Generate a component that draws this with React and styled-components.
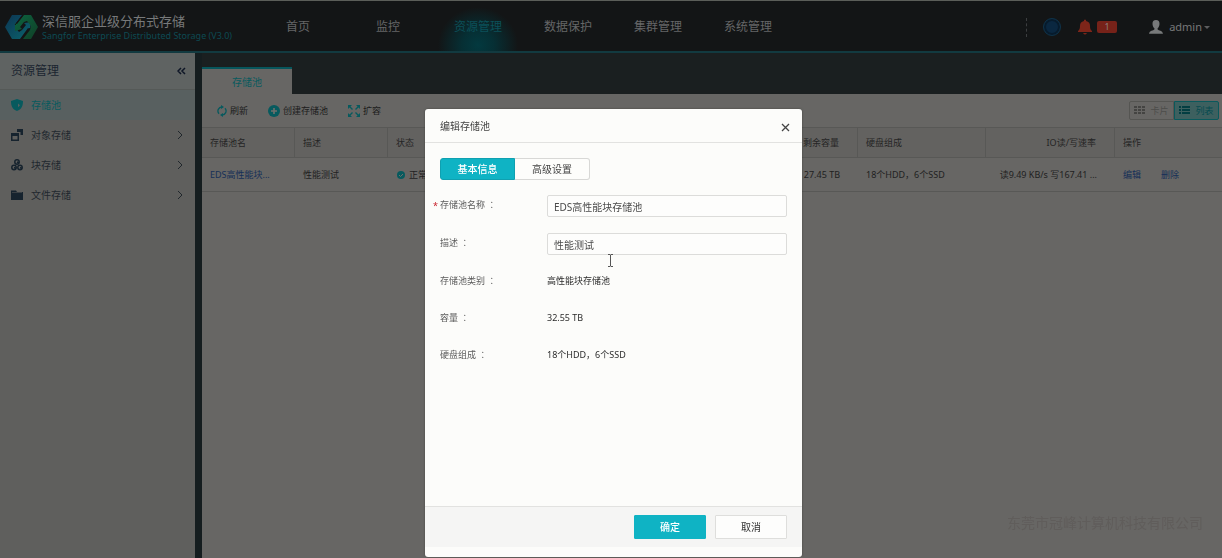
import React from "react";
import styled, { createGlobalStyle, css } from "styled-components";

const teal = "#0fb3c4";
const dimTeal = "#075a5e";
const line = "#585856";

const Global = createGlobalStyle`
  *, *::before, *::after { box-sizing: border-box; }
  body {
    margin: 0;
    font-family: "Noto Sans", "Noto Sans CJK SC", sans-serif;
    font-size: 9px;
    line-height: 14px;
    color: #1f1f1f;
    background: #676664;
  }
  button, input { font-family: inherit; font-size: inherit; line-height: inherit; color: inherit; }
  button { cursor: pointer; background: none; border: 0; padding: 0; }
  a { color: inherit; text-decoration: none; }
  h1, h2, p, ul { margin: 0; padding: 0; font-weight: 400; }
  ul { list-style: none; }
`;

const Page = styled.div`
  min-height: 100vh;
  display: flex;
  flex-direction: column;
`;

const Header = styled.header`
  height: 53px;
  padding-top: 2px;
  display: flex;
  align-items: center;
  background: #131516;
  border-top: 1px solid #5b5e59;
  border-bottom: 2px solid #123a40;
`;

const Brand = styled.div`
  width: 253px;
  flex: none;
  padding-left: 5px;
  display: flex;
  align-items: center;
  gap: 4px;
  white-space: nowrap;
`;

const BrandName = styled.h1`
  font-size: 13px;
  line-height: 16px;
  color: #77797a;
`;

const BrandSub = styled.p`
  font-size: 9px;
  line-height: 13px;
  color: #0d4a53;
`;

const Nav = styled.nav`
  display: flex;
  flex: 1;
  align-self: stretch;
`;

const NavLink = styled.a`
  width: 90px;
  display: flex;
  align-items: center;
  justify-content: center;
  font-size: 12px;
  color: ${(p) => (p.$active ? "#0b5059" : "#656667")};
  ${(p) =>
    p.$active &&
    css`
      background: radial-gradient(ellipse 40px 38px at 50% 88%, #03393f 0%, #062f34 40%, #131516 100%);
    `}
`;

const Tools = styled.div`
  display: flex;
  align-items: center;
  padding-right: 12px;
`;

const Dashes = styled.span`
  height: 19px;
  border-left: 1px dashed #3c3e40;
  margin-right: 16px;
`;

const Orb = styled.span`
  width: 18px;
  height: 18px;
  border-radius: 50%;
  background: #0a2740;
  border: 1px solid #0f3248;
  box-shadow: inset 0 0 0 2px #071b2c;
  margin-right: 17px;
`;

const Alerts = styled.button`
  display: flex;
  align-items: center;
  gap: 5px;
  margin-right: 32px;
`;

const Count = styled.span`
  width: 20px;
  height: 12px;
  border-radius: 2px;
  background: #762219;
  color: #8a7f7d;
  font-size: 9px;
  line-height: 12px;
  text-align: center;
`;

const Account = styled.button`
  display: flex;
  align-items: center;
  font-size: 11px;
  color: #777879;
  gap: 6px;
`;

const Caret = styled.span`
  border: 3px solid transparent;
  border-top-color: #5c5d5e;
  border-bottom: 0;
  margin-left: -4px;
`;

const Body = styled.div`
  flex: 1;
  display: flex;
`;

const Sidebar = styled.aside`
  width: 195px;
  flex: none;
  background: #5f5f5d;
`;

const SideHead = styled.div`
  height: 37px;
  padding: 0 9px 0 11px;
  display: flex;
  align-items: center;
  justify-content: space-between;
  font-size: 12px;
  color: #1b2530;
  background: #5f6362;
  border-bottom: 1px solid #555957;
`;

const IconButton = styled.button`
  display: flex;
  padding-top: ${(p) => p.$drop || 0}px;
`;

const SideLink = styled.a`
  height: 30px;
  display: flex;
  align-items: center;
  gap: 8px;
  padding: 0 11px;
  font-size: 10px;
  color: ${(p) => (p.$active ? dimTeal : "#1f282f")};
  background: ${(p) => (p.$active ? "#586060" : "transparent")};
`;

const SideText = styled.span`
  flex: 1;
`;

const Main = styled.main`
  flex: 1;
  min-width: 0;
  border-left: 7px solid #151d1f;
`;

const TabBar = styled.div`
  height: 41px;
  display: flex;
  align-items: flex-end;
  background: #1a1f20;
`;

const Tab = styled.a`
  width: 90px;
  height: 27px;
  display: flex;
  align-items: center;
  justify-content: center;
  font-size: 10px;
  color: ${dimTeal};
  background: #676664;
  border-top: 2px solid #07565c;
`;

const Toolbar = styled.div`
  height: 33px;
  padding: 0 3px 0 15px;
  display: flex;
  align-items: center;
  gap: 20px;
`;

const ToolButton = styled.button`
  display: flex;
  align-items: center;
  gap: 3px;
  color: #1c1c1c;
`;

const ViewSwitch = styled.div`
  margin-left: auto;
  display: flex;
`;

const ViewButton = styled.button`
  width: 45px;
  height: 19px;
  display: flex;
  align-items: center;
  justify-content: center;
  gap: 5px;
  border: 1px solid ${(p) => (p.$on ? "#0a595c" : "#555552")};
  border-radius: ${(p) => (p.$on ? "0 2px 2px 0" : "2px 0 0 2px")};
  background: ${(p) => (p.$on ? "#3d605f" : "transparent")};
  color: ${(p) => (p.$on ? "#064b4f" : "#4d4d4b")};
`;

const Table = styled.table`
  width: 100%;
  table-layout: fixed;
  border-collapse: separate;
  border-spacing: 0;
`;

const Cell = styled.td`
  height: 34px;
  padding: 1px ${(p) => (p.$right ? 18 : 8)}px 0 8px;
  text-align: ${(p) => (p.$right ? "right" : "left")};
  font-weight: 400;
  white-space: nowrap;
  overflow: hidden;
  border-bottom: 1px solid ${line};
`;

const HeadCell = styled(Cell)`
  height: 31px;
  padding-top: 0;
  color: #252525;
  background: #636260;
  border-top: 1px solid ${line};
  border-right: 1px solid ${line};
  &:last-child { border-right: 0; }
`;

const Link = styled.a`
  color: #152f57;
`;

const RowActions = styled.div`
  display: flex;
  gap: 20px;
`;

const Status = styled.span`
  display: flex;
  align-items: center;
  gap: 4px;
  padding-left: 1px;
`;

const Watermark = styled.p`
  position: fixed;
  right: 19px;
  bottom: 25px;
  font-size: 14px;
  line-height: 20px;
  color: #605d5b;
`;

const Overlay = styled.div`
  position: fixed;
  inset: 0;
  padding: 109px 0 0 5px;
  display: flex;
  justify-content: center;
  align-items: flex-start;
`;

const Dialog = styled.section`
  width: 377px;
  background: #fcfcfa;
  border-radius: 3px;
  box-shadow: 0 0 2px #3d3d3b;
  padding-bottom: 10px;
`;

const DialogHead = styled.div`
  height: 34px;
  padding: 0 12px 0 15px;
  display: flex;
  align-items: center;
  justify-content: space-between;
  border-bottom: 1px solid #e2e2e0;
`;

const DialogTitle = styled.h2`
  font-size: 10px;
  line-height: 14px;
  color: #444;
`;

const DialogBody = styled.form`
  min-height: 363px;
  padding: 15px 15px 0;
`;

const Segments = styled.div`
  display: flex;
  margin-bottom: 15px;
`;

const Segment = styled.button`
  width: 75px;
  height: 22px;
  font-size: 10px;
  border: 1px solid ${(p) => (p.$on ? "#0fa0b0" : "#d8d8d6")};
  border-left-width: ${(p) => (p.$on ? 1 : 0)}px;
  border-radius: ${(p) => (p.$on ? "3px 0 0 3px" : "0 3px 3px 0")};
  background: ${(p) => (p.$on ? teal : "#fdfdfb")};
  color: ${(p) => (p.$on ? "#fff" : "#444")};
  font-weight: ${(p) => (p.$on ? 500 : 400)};
`;

const Field = styled.div`
  position: relative;
  display: flex;
  align-items: center;
  height: 22px;
  margin-bottom: ${(p) => (p.$plain ? 15 : 16)}px;
`;

const Label = styled.label`
  width: 107px;
  flex: none;
  padding-bottom: 2px;
  color: #5c5c5c;
`;

const Colon = styled.span`
  font-family: "Noto Sans CJK TC", sans-serif;
  line-height: 1;
`;

const Required = styled.span`
  position: absolute;
  left: -7px;
  color: #c8202a;
`;

const Input = styled.input`
  flex: 1;
  min-width: 0;
  height: 22px;
  padding: 0 6px;
  font-size: 10px;
  color: #4a4a4a;
  background: #fdfdfc;
  border: 1px solid #dcdcda;
  border-radius: 2px;
`;

const Value = styled.output`
  padding-bottom: 2px;
  color: #2b2b2b;
`;

const Pointer = styled.svg`
  position: absolute;
  left: 167px;
  top: 21px;
`;

const DialogFoot = styled.div`
  height: 41px;
  padding: 0 15px;
  display: flex;
  align-items: center;
  justify-content: flex-end;
  gap: 9px;
  background: #f5f5f4;
  border-top: 1px solid #e2e2e0;
`;

const Action = styled.button`
  width: 72px;
  height: 24px;
  font-size: 10px;
  border: 1px solid ${(p) => (p.$primary ? teal : "#dededc")};
  border-radius: 1px;
  background: ${(p) => (p.$primary ? teal : "#fdfdfc")};
  color: ${(p) => (p.$primary ? "#fff" : "#333")};
  font-weight: ${(p) => (p.$primary ? 500 : 400)};
`;

const Logo = () => (
  <svg width="33" height="26" viewBox="0 0 33 26" aria-hidden="true">
    <defs>
      <linearGradient id="logo-blue" x1="0" y1="0" x2="1" y2="1">
        <stop offset="0" stopColor="#0c3553" />
        <stop offset="1" stopColor="#0b646d" />
      </linearGradient>
      <linearGradient id="logo-green" x1="0" y1="0" x2="1" y2="1">
        <stop offset="0" stopColor="#0c6440" />
        <stop offset="1" stopColor="#103f26" />
      </linearGradient>
    </defs>
    <path fill="url(#logo-blue)" d="M7 1h10l-6 8-1 4 4 5 3-2 4-5-2-2 7-1-1 7-2-1-8 11H7L0 13z" />
    <path fill="url(#logo-green)" d="M19 1h7l7 12-7 12h-8l7-9 1-4-4-5-3 1-4 5 2 2-7 2v-8l2 1z" />
    <path fill="none" stroke="#131516" d="M18 1l-8 10M16 25l9-11" />
  </svg>
);

const Bell = () => (
  <svg width="14" height="16" viewBox="0 0 14 16" fill="#7d2519" aria-hidden="true">
    <path d="M6 2V1q1-1 2 0v1c3 .6 4 2.600 4 5 0 3 .8 4 2 5v1H0v-1c1.200-1 2-2 2-5 0-2.400 1-4.400 4-5zM5 14h4q-2 3-4 0z" />
  </svg>
);

const Person = () => (
  <svg width="14" height="14" viewBox="0 0 14 14" fill="#77797a" aria-hidden="true">
    <path d="M7 0c2.500 0 3.600 1.600 3.500 4S9.400 7.600 8.600 8.300v1.300c1 1 4.900 1 5.400 4.200H0c.5-3.200 4.400-3.200 5.400-4.200V8.300C4.600 7.600 3.600 6.400 3.500 4S4.500 0 7 0z" />
  </svg>
);

const sideIcons = {
  pool: (
    <path fill={dimTeal} d="M6 0l6 2c0 5-1.500 8.500-6 10C1.500 10.500 0 7 0 2zM7 4.500l2 1.800-2 2z" fillRule="evenodd" />
  ),
  object: (
    <path fill="#16232e" fillRule="evenodd" d="M0 4h8v8H0zM1.500 7v3.500h5V7zM6 0h6v6H9.500V3H6z" />
  ),
  block: (
    <g fill="none" stroke="#16232e" strokeWidth="1.500">
      <circle cx="6" cy="3" r="2.200" />
      <circle cx="3" cy="8.500" r="2.200" />
      <circle cx="9" cy="8.500" r="2.200" />
      <path d="M3 8.500l2 1M6 3l2 1M9 8.500l2 1" />
    </g>
  ),
  file: <path fill="#16232e" d="M0 1.500h5l1 1.500h6v8H0zM1 3.500v.6h10v-.6z" fillRule="evenodd" />,
};

const SideIcon = ({ name }) => (
  <svg width="12" height="12" viewBox="0 0 12 12" aria-hidden="true">
    {sideIcons[name]}
  </svg>
);

const Chevron = () => (
  <svg width="8" height="10" viewBox="0 0 8 10" fill="none" stroke="#20272c" aria-hidden="true">
    <path d="M2 1l4 4-4 4" />
  </svg>
);

const Refresh = () => (
  <svg width="10" height="12" viewBox="0 0 10 12" fill="none" stroke={dimTeal} strokeWidth="1.300" aria-hidden="true">
    <path d="M5 2a4 4 0 0 0-3 6.700M5 10a4 4 0 0 0 3-6.700" />
    <path fill={dimTeal} stroke="none" d="M4 0l3 2-3 2zM6 8v4L3 10z" />
  </svg>
);

const Plus = () => (
  <svg width="12" height="12" viewBox="0 0 12 12" aria-hidden="true">
    <circle cx="6" cy="6" r="6" fill={dimTeal} />
    <path d="M6 3v6M3 6h6" stroke="#70706d" strokeWidth="1.600" />
  </svg>
);

const Expand = () => (
  <svg width="12" height="12" viewBox="0 0 12 12" fill={dimTeal} stroke={dimTeal} aria-hidden="true">
    <path stroke="none" d="M0 0h4L0 4zM8 0h4v4zM0 8l4 4H0zM12 8v4H8z" />
    <path strokeWidth="1.400" d="M1 1l3.500 3.500M11 1L7.500 4.500M1 11l3.500-3.500M11 11L7.500 7.500" />
  </svg>
);

const Grid = () => (
  <svg width="11" height="9" viewBox="0 0 11 9" fill="#444442" aria-hidden="true">
    <path d="M0 0h3v2H0zM4 0h3v2H4zM8 0h3v2H8zM0 3h3v2H0zM4 3h3v2H4zM8 3h3v2H8zM0 6h3v2H0zM4 6h3v2H4zM8 6h3v2H8z" />
  </svg>
);

const List = () => (
  <svg width="11" height="9" viewBox="0 0 11 9" fill="#033e42" aria-hidden="true">
    <path d="M0 0h2v2H0zM3 0h8v2H3zM0 3h2v2H0zM3 3h8v2H3zM0 6h2v2H0zM3 6h8v2H3z" />
  </svg>
);

const Check = () => (
  <svg width="8" height="8" viewBox="0 0 8 8" aria-hidden="true">
    <circle cx="4" cy="4" r="4" fill={dimTeal} />
    <path d="M2 4l1.500 1.500L6 3" fill="none" stroke="#70706d" />
  </svg>
);

const navItems = ["首页", "监控", "资源管理", "数据保护", "集群管理", "系统管理"];
const sideItems = [
  ["pool", "存储池"],
  ["object", "对象存储"],
  ["block", "块存储"],
  ["file", "文件存储"],
];
const details = [
  ["存储池类别", "高性能块存储池"],
  ["容量", "32.55 TB"],
  ["硬盘组成", "18个HDD，6个SSD"],
];

const FieldLabel = ({ htmlFor, children }) => (
  <Label htmlFor={htmlFor}>
    {children} <Colon>：</Colon>
  </Label>
);

export default function App() {
  return (
    <>
      <Global />
      <Page>
        <Header>
          <Brand>
            <Logo />
            <div>
              <BrandName>深信服企业级分布式存储</BrandName>
              <BrandSub>Sangfor Enterprise Distributed Storage (V3.0)</BrandSub>
            </div>
          </Brand>
          <Nav>
            {navItems.map((t) => (
              <NavLink key={t} href="#" $active={t === "资源管理"}>{t}</NavLink>
            ))}
          </Nav>
          <Tools>
            <Dashes />
            <Orb />
            <Alerts type="button"><Bell /><Count>1</Count></Alerts>
            <Account type="button"><Person />admin<Caret /></Account>
          </Tools>
        </Header>
        <Body>
          <Sidebar>
            <SideHead>
              资源管理
              <IconButton type="button" aria-label="收起">
                <svg width="9" height="8" viewBox="0 0 9 8" fill="none" stroke="#0e1626" strokeWidth="1.500">
                  <path d="M4 1L1 4l3 3M8 1L5 4l3 3" />
                </svg>
              </IconButton>
            </SideHead>
            <ul>
              {sideItems.map(([icon, text]) => (
                <li key={icon}>
                  <SideLink href="#" $active={icon === "pool"}>
                    <SideIcon name={icon} />
                    <SideText>{text}</SideText>
                    {icon !== "pool" && <Chevron />}
                  </SideLink>
                </li>
              ))}
            </ul>
          </Sidebar>
          <Main>
            <TabBar><Tab href="#">存储池</Tab></TabBar>
            <Toolbar>
              <ToolButton type="button"><Refresh />刷新</ToolButton>
              <ToolButton type="button"><Plus />创建存储池</ToolButton>
              <ToolButton type="button"><Expand />扩容</ToolButton>
              <ViewSwitch>
                <ViewButton type="button"><Grid />卡片</ViewButton>
                <ViewButton type="button" $on><List />列表</ViewButton>
              </ViewSwitch>
            </Toolbar>
            <Table>
              <colgroup>
                <col width="93" />
                <col width="93" />
                <col />
                <col width="128" />
                <col width="128" />
                <col width="129" />
                <col width="107" />
              </colgroup>
              <thead>
                <tr>
                  <HeadCell as="th">存储池名</HeadCell>
                  <HeadCell as="th">描述</HeadCell>
                  <HeadCell as="th">状态</HeadCell>
                  <HeadCell as="th" $right>剩余容量</HeadCell>
                  <HeadCell as="th">硬盘组成</HeadCell>
                  <HeadCell as="th" $right>IO读/写速率</HeadCell>
                  <HeadCell as="th">操作</HeadCell>
                </tr>
              </thead>
              <tbody>
                <tr>
                  <Cell><Link href="#">EDS高性能块...</Link></Cell>
                  <Cell>性能测试</Cell>
                  <Cell><Status><Check />正常</Status></Cell>
                  <Cell $right>27.45 TB</Cell>
                  <Cell>18个HDD，6个SSD</Cell>
                  <Cell $right>读9.49 KB/s 写167.41 ...</Cell>
                  <Cell>
                    <RowActions>
                      <Link href="#">编辑</Link>
                      <Link href="#">删除</Link>
                    </RowActions>
                  </Cell>
                </tr>
              </tbody>
            </Table>
          </Main>
        </Body>
      </Page>
      <Watermark>东莞市冠峰计算机科技有限公司</Watermark>
      <Overlay>
        <Dialog role="dialog" aria-labelledby="dialog-title">
          <DialogHead>
            <DialogTitle id="dialog-title">编辑存储池</DialogTitle>
            <IconButton type="button" aria-label="关闭" $drop={4}>
              <svg width="9" height="9" viewBox="0 0 9 9" stroke="#444" strokeWidth="1.300">
                <path d="M1 1l7 7M8 1L1 8" />
              </svg>
            </IconButton>
          </DialogHead>
          <DialogBody>
            <Segments>
              <Segment type="button" $on>基本信息</Segment>
              <Segment type="button">高级设置</Segment>
            </Segments>
            <Field>
              <Required>*</Required>
              <FieldLabel htmlFor="pool-name">存储池名称</FieldLabel>
              <Input id="pool-name" defaultValue="EDS高性能块存储池" />
            </Field>
            <Field>
              <FieldLabel htmlFor="pool-desc">描述</FieldLabel>
              <Input id="pool-desc" defaultValue="性能测试" />
              <Pointer width="7" height="13" viewBox="0 0 7 13" fill="none" stroke="#555" aria-hidden="true">
                <path d="M1 .5h2l.5 1 .5-1h2M3.500 1v11M1 12.500h2l.5-1 .5 1h2" />
              </Pointer>
            </Field>
            {details.map(([k, v], i) => (
              <Field key={k} $plain>
                <FieldLabel htmlFor={`detail-${i}`}>{k}</FieldLabel>
                <Value id={`detail-${i}`}>{v}</Value>
              </Field>
            ))}
          </DialogBody>
          <DialogFoot>
            <Action type="button" $primary>确定</Action>
            <Action type="button">取消</Action>
          </DialogFoot>
        </Dialog>
      </Overlay>
    </>
  );
}
